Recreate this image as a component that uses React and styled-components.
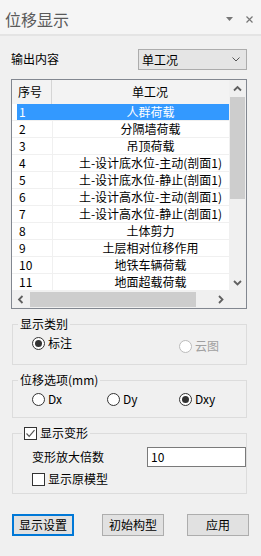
import React from 'react';
import styled, { createGlobalStyle } from 'styled-components';

const GlobalStyle = createGlobalStyle`
    html, body {
        margin: 0;
        padding: 0;
        background: #f0f0f0;
    }

    body {
        font-family: "Noto Sans CJK SC", "Microsoft YaHei", sans-serif;
        font-size: 12px;
        color: #000;
    }
`;

const Panel = styled.div`
    width: 261px;
    height: 556px;
    background: #f0f0f0;
    overflow: hidden;
`;

const TitleBar = styled.div`
    height: 36px;
    box-sizing: border-box;
    padding: 4px 8px 0 5px;
    display: flex;
    align-items: center;
    background: #f5f5f5;
    border-bottom: 2px solid #e4e4e4;
`;

const Title = styled.div`
    flex: 1;
    font-size: 16px;
    line-height: 20px;
    color: #5a5a5a;
`;

const TitleIcons = styled.div`
    display: flex;
    align-items: center;
    gap: 13px;

    svg {
        display: block;
    }
`;

const Content = styled.div`
    padding: 0 13px 0 11px;
`;

const OutputRow = styled.div`
    display: flex;
    align-items: center;
    height: 21px;
    margin-top: 13px;
`;

const OutputLabel = styled.div`
    flex: 0 0 127px;
    line-height: 16px;
    margin-top: -2px;
`;

const Dropdown = styled.div`
    width: 109px;
    height: 21px;
    box-sizing: border-box;
    border: 1px solid #acacac;
    background: #e5e5e5;
    display: flex;
    align-items: center;
    justify-content: space-between;
    padding: 0 6px 0 3px;
    line-height: 16px;
`;

const Table = styled.div`
    margin-top: 9px;
    width: 236px;
    height: 230px;
    box-sizing: border-box;
    border: 1px solid #828790;
    background: #fff;
    display: grid;
    grid-template-columns: 217px 17px;
    grid-template-rows: 211px 17px;
`;

const GridArea = styled.div`
    overflow: hidden;
`;

const HeaderRow = styled.div`
    display: flex;
    width: 236px;
    height: 24px;
    background: #f3f3f3;
    line-height: 24px;
`;

const HeaderCell = styled.div`
    box-sizing: border-box;
    width: ${p => p.$width}px;
    padding-left: ${p => (p.$center ? 0 : 6)}px;
    text-align: ${p => (p.$center ? 'center' : 'left')};
    border-right: ${p => (p.$center ? 'none' : '1px solid #d5d5d5')};
`;

const BodyRow = styled.div`
    display: flex;
    width: 236px;
    height: 17px;
    box-sizing: border-box;
    padding-left: 5px;
    border-bottom: 1px solid #f0f0f0;
    line-height: 16px;
`;

const NumCell = styled.div`
    box-sizing: border-box;
    width: 36px;
    padding-left: 2px;
    border-right: 1px solid ${p => (p.$selected ? '#3399ff' : '#f0f0f0')};
    background: ${p => (p.$selected ? '#3399ff' : 'transparent')};
    color: ${p => (p.$selected ? '#fff' : '#000')};
`;

const NameCell = styled.div`
    width: 195px;
    text-align: center;
    white-space: nowrap;
    background: ${p => (p.$selected ? '#3399ff' : 'transparent')};
    color: ${p => (p.$selected ? '#fff' : '#000')};
`;

const VScroll = styled.div`
    background: #f0f0f0;
    display: flex;
    flex-direction: column;
`;

const HScroll = styled.div`
    background: #f0f0f0;
    display: flex;
`;

const Corner = styled.div`
    background: #f0f0f0;
`;

const ArrowBox = styled.div`
    flex: 0 0 17px;
    height: 17px;
    display: flex;
    align-items: center;
    justify-content: center;
`;

const VThumb = styled.div`
    height: 102px;
    margin: 0 1px;
    background: #cdcdcd;
`;

const HThumb = styled.div`
    width: 166px;
    margin: 1px 0 1px 1px;
    background: #cdcdcd;
`;

const Spacer = styled.div`
    flex: 1;
`;

const Group = styled.fieldset`
    width: 235px;
    box-sizing: border-box;
    margin: 7px 0 0 1px;
    padding: 0;
    border: 1px solid #dcdcdc;
    min-inline-size: 0;
`;

const Legend = styled.legend`
    margin-left: ${p => p.$indent}px;
    padding: 0 2px;
    line-height: 16px;
    display: flex;
    align-items: center;
    gap: 3px;
`;

const RadioGrid = styled.div`
    display: grid;
    grid-template-columns: 75px 72px 1fr;
    padding: 3px 0 10px 19px;
`;

const RadioItem = styled.label`
    display: flex;
    align-items: center;
    gap: 3px;
    height: 16px;
    line-height: 16px;
    grid-column: ${p => p.$col};
    margin-top: ${p => p.$shift || 0}px;
    color: ${p => (p.$disabled ? '#a0a0a0' : '#000')};
`;

const RadioCircle = styled.span`
    width: 13px;
    height: 13px;
    box-sizing: border-box;
    border-radius: 50%;
    border: 1px solid ${p => (p.$disabled ? '#bcbcbc' : '#333')};
    background: #fff;
    display: flex;
    align-items: center;
    justify-content: center;

    &::after {
        content: '';
        width: 7px;
        height: 7px;
        border-radius: 50%;
        background: ${p => (p.$checked ? '#333' : 'transparent')};
    }
`;

const CheckBox = styled.span`
    width: 13px;
    height: 13px;
    box-sizing: border-box;
    border: 1px solid #333;
    background: #fff;
    display: flex;
    align-items: center;
    justify-content: center;
`;

const DeformBody = styled.div`
    padding: 6px 0 6px 19px;
`;

const ScaleRow = styled.div`
    display: flex;
    align-items: center;
    height: 20px;
`;

const ScaleLabel = styled.div`
    flex: 0 0 115px;
    line-height: 16px;
`;

const ScaleInput = styled.div`
    width: 99px;
    height: 20px;
    box-sizing: border-box;
    border: 1px solid #7a7a7a;
    background: #fff;
    padding-left: 3px;
    line-height: 18px;
`;

const CheckRow = styled.label`
    display: flex;
    align-items: center;
    gap: 3px;
    height: 16px;
    line-height: 16px;
    margin-top: 4px;
`;

const ButtonRow = styled.div`
    display: grid;
    grid-template-columns: 90px 85px 62px;
    margin: 20px 0 0 1px;
`;

const Button = styled.div`
    width: 62px;
    height: 22px;
    box-sizing: border-box;
    background: #e1e1e1;
    border: ${p => (p.$focused ? '2px solid #0078d7' : '1px solid #adadad')};
    display: flex;
    align-items: center;
    justify-content: center;
    line-height: 16px;
`;

const LOAD_CASES = [
    '人群荷载',
    '分隔墙荷载',
    '吊顶荷载',
    '土-设计底水位-主动(剖面1)',
    '土-设计底水位-静止(剖面1)',
    '土-设计高水位-主动(剖面1)',
    '土-设计高水位-静止(剖面1)',
    '土体剪力',
    '土层相对位移作用',
    '地铁车辆荷载',
    '地面超载荷载',
];

const Chevron = ({ dir }) => {
    const points = {
        up: '1,5.5 4.5,2 8,5.5',
        down: '1,2 4.5,5.5 8,2',
        left: '5.5,1 2,4.5 5.5,8',
        right: '2,1 5.5,4.5 2,8',
    }[dir];
    const vertical = dir === 'up' || dir === 'down';
    return (
        <svg width={vertical ? 9 : 8} height={vertical ? 8 : 9} viewBox={vertical ? '0 0 9 8' : '0 0 8 9'}>
            <polyline points={points} fill='none' stroke='#606060' strokeWidth='1.8' />
        </svg>
    );
};

const Radio = ({ label, checked, disabled, col, shift }) => (
    <RadioItem $col={col} $disabled={disabled} $shift={shift}>
        <RadioCircle $checked={checked} $disabled={disabled} />
        {label}
    </RadioItem>
);

const Check = ({ checked }) => (
    <CheckBox>
        {checked && (
            <svg width='11' height='11' viewBox='0 0 11 11'>
                <polyline points='1.5,5.5 4.2,8.3 9.5,2.2' fill='none' stroke='#555' strokeWidth='1.2' />
            </svg>
        )}
    </CheckBox>
);

const App = () => {
    return (
        <Panel>
            <GlobalStyle />
            <TitleBar>
                <Title>位移显示</Title>
                <TitleIcons>
                    <svg width='7' height='4' viewBox='0 0 7 4'>
                        <polygon points='0,0 7,0 3.5,4' fill='#777' />
                    </svg>
                    <svg width='7' height='7' viewBox='0 0 7 7'>
                        <path d='M0.5 0.5 L6.5 6.5 M6.5 0.5 L0.5 6.5' stroke='#777' strokeWidth='1.2' />
                    </svg>
                </TitleIcons>
            </TitleBar>

            <Content>
                <OutputRow>
                    <OutputLabel>输出内容</OutputLabel>
                    <Dropdown>
                        <span>单工况</span>
                        <svg width='8' height='5' viewBox='0 0 8 5'>
                            <polyline points='0.5,0.5 4,4 7.5,0.5' fill='none' stroke='#555' strokeWidth='1' />
                        </svg>
                    </Dropdown>
                </OutputRow>

                <Table>
                    <GridArea>
                        <HeaderRow>
                            <HeaderCell $width={40}>序号</HeaderCell>
                            <HeaderCell $width={196} $center>单工况</HeaderCell>
                        </HeaderRow>
                        {LOAD_CASES.map((name, i) => (
                            <BodyRow key={name}>
                                <NumCell $selected={i === 0}>{i + 1}</NumCell>
                                <NameCell $selected={i === 0}>{name}</NameCell>
                            </BodyRow>
                        ))}
                    </GridArea>
                    <VScroll>
                        <ArrowBox><Chevron dir='up' /></ArrowBox>
                        <VThumb />
                        <Spacer />
                        <ArrowBox><Chevron dir='down' /></ArrowBox>
                    </VScroll>
                    <HScroll>
                        <ArrowBox><Chevron dir='left' /></ArrowBox>
                        <HThumb />
                        <Spacer />
                        <ArrowBox><Chevron dir='right' /></ArrowBox>
                    </HScroll>
                    <Corner />
                </Table>

                <Group>
                    <Legend $indent={5}>显示类别</Legend>
                    <RadioGrid>
                        <Radio label='标注' checked col={1} />
                        <Radio label='云图' disabled col={3} shift={3} />
                    </RadioGrid>
                </Group>

                <Group>
                    <Legend $indent={5}>位移选项(mm)</Legend>
                    <RadioGrid>
                        <Radio label='Dx' col={1} />
                        <Radio label='Dy' col={2} />
                        <Radio label='Dxy' checked col={3} />
                    </RadioGrid>
                </Group>

                <Group>
                    <Legend $indent={9}>
                        <Check checked />
                        显示变形
                    </Legend>
                    <DeformBody>
                        <ScaleRow>
                            <ScaleLabel>变形放大倍数</ScaleLabel>
                            <ScaleInput>10</ScaleInput>
                        </ScaleRow>
                        <CheckRow>
                            <Check />
                            显示原模型
                        </CheckRow>
                    </DeformBody>
                </Group>

                <ButtonRow>
                    <Button $focused>显示设置</Button>
                    <Button>初始构型</Button>
                    <Button>应用</Button>
                </ButtonRow>
            </Content>
        </Panel>
    );
};

export default App;
